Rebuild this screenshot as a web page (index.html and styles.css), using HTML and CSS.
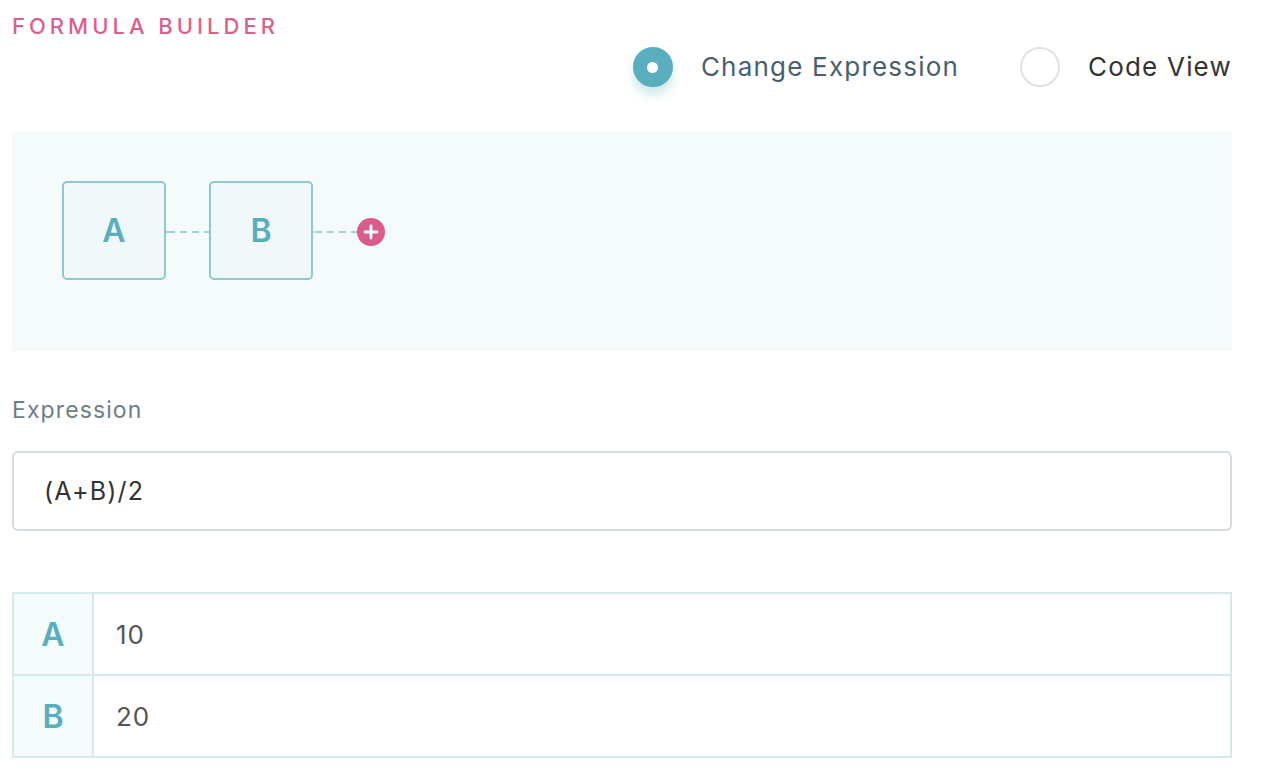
FILE: index.html
```html
<!DOCTYPE html>
<html>
<head>
<meta charset="utf-8">
<link rel="stylesheet" href="styles.css">
</head>
<body>
<div class="page">
  <div class="title">FORMULA BUILDER</div>
  <div class="modes">
    <div class="mode">
      <span class="radio radio-on"><span class="dot"></span></span>
      <span class="mode-label mode-label-on">Change Expression</span>
    </div>
    <div class="mode">
      <span class="radio"></span>
      <span class="mode-label">Code View</span>
    </div>
  </div>
  <div class="canvas">
    <div class="node">A</div>
    <div class="link"></div>
    <div class="node">B</div>
    <div class="link link-short"></div>
    <div class="add">
      <svg width="28" height="28" viewBox="0 0 28 28">
        <circle cx="14" cy="14" r="14" fill="#d95c8c"/>
        <path d="M14 8v12M8 14h12" stroke="#fff" stroke-width="2.8" stroke-linecap="round"/>
      </svg>
    </div>
  </div>
  <div class="field-label">Expression</div>
  <div class="input">(A+B)/2</div>
  <div class="vars">
    <div class="var-row">
      <div class="var-name">A</div>
      <div class="var-value">10</div>
    </div>
    <div class="var-row">
      <div class="var-name">B</div>
      <div class="var-value">20</div>
    </div>
  </div>
</div>
</body>
</html>
```

FILE: styles.css
```css
* { box-sizing: border-box; }
html, body { margin: 0; padding: 0; background: #fff; }
body { font-family: "Inter", "Liberation Sans", sans-serif; }
.page { width: 1262px; padding: 13px 30px 0 12px; }
.title {
  font-size: 22px;
  letter-spacing: 4px;
  color: #d9618e;
  font-weight: 500;
  line-height: 26px;
}
.modes {
  display: flex;
  justify-content: flex-end;
  gap: 61px;
  margin-top: 8px;
  height: 40px;
  align-items: center;
}
.mode { display: flex; align-items: center; gap: 28px; }
.radio {
  width: 40px; height: 40px; border-radius: 50%;
  border: 2px solid #dde2e5; background: #fff;
  display: flex; align-items: center; justify-content: center;
}
.radio-on {
  background: #5aafbf; border-color: #5aafbf;
  box-shadow: 0 8px 10px rgba(90, 175, 191, 0.28);
}
.dot { width: 11px; height: 11px; border-radius: 50%; background: #fff; }
.mode-label { font-size: 26px; color: #333; line-height: 32px; letter-spacing: 1.2px; }
.mode-label-on { color: #4a5f6e; }
.canvas {
  margin-top: 44px;
  height: 220px;
  background: #f5fbfa;
  padding: 50px 50px;
  display: flex;
  align-items: flex-start;
}
.node {
  width: 104px; height: 99px;
  border: 2px solid #8fc8ce;
  border-radius: 5px;
  background: #f0f8f9;
  color: #5aafbf;
  font-size: 32px;
  font-weight: 600;
  display: flex; align-items: center; justify-content: center;
}
.link {
  width: 43px; height: 2px;
  margin-top: 50px;
  background: repeating-linear-gradient(90deg, #9fd3d8 0 7px, transparent 7px 12px);
  background-position: 2px 0;
}
.link-short { width: 44px; }
.add { margin-top: 37px; height: 28px; }
.add svg { display: block; }
.field-label {
  margin-top: 45px;
  font-size: 23px;
  letter-spacing: 1.1px;
  color: #6e7d87;
  line-height: 28px;
}
.input {
  margin-top: 27px;
  height: 80px;
  border: 2px solid #d4dce1;
  border-radius: 6px;
  padding: 0 30px;
  display: flex; align-items: center;
  font-size: 25px;
  letter-spacing: 1.2px;
  color: #333;
}
.vars {
  margin-top: 61px;
  border: 2px solid #d5eaed;
}
.var-row { display: flex; height: 80px; }
.var-row + .var-row { border-top: 2px solid #d5eaed; height: 82px; }
.var-name {
  width: 80px;
  background: #f4fbfb;
  border-right: 2px solid #d5eaed;
  color: #5aafbf;
  font-size: 32px;
  font-weight: 600;
  display: flex; align-items: center; justify-content: center;
}
.var-value {
  flex: 1;
  padding-left: 22px;
  display: flex; align-items: center;
  font-size: 26px;
  letter-spacing: 0.8px;
  color: #555;
}
```
